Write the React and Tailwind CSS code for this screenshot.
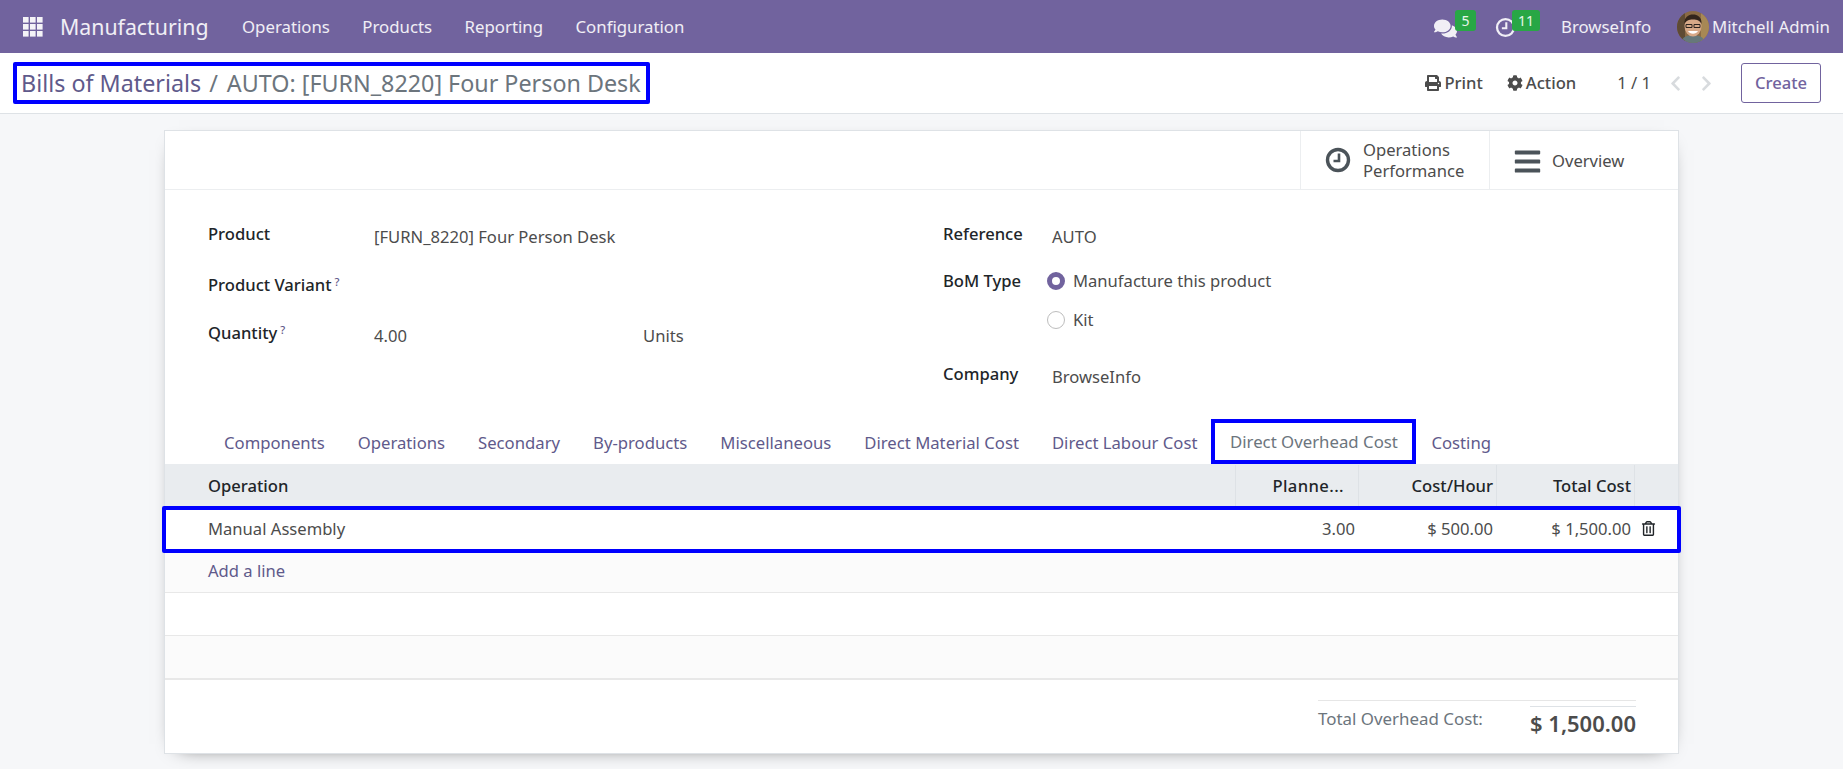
import { FaComments, FaPrint, FaCog, FaBars, FaRegTrashAlt, FaChevronLeft, FaChevronRight } from "react-icons/fa";

const MENU = ["Operations", "Products", "Reporting", "Configuration"];

const TABS = [
    "Components",
    "Operations",
    "Secondary",
    "By-products",
    "Miscellaneous",
    "Direct Material Cost",
    "Direct Labour Cost",
];

function AppsIcon() {
    const cells = [0, 7, 14];
    return (
        <svg width="20" height="20" viewBox="0 0 20 20" fill="#fff" fillOpacity="0.92">
            {cells.map((y) =>
                cells.map((x) => <rect key={`${x}-${y}`} x={x} y={y} width="5.6" height="5.6" />),
            )}
        </svg>
    );
}

function Avatar() {
    return (
        <svg width="32" height="32" viewBox="0 0 32 32" className="rounded-full">
            <rect width="32" height="32" fill="#8a6a45" />
            <rect x="0" y="0" width="8" height="32" fill="#5e4a34" />
            <rect x="24" y="0" width="8" height="32" fill="#a78855" />
            <path d="M4 32c1-6 6-8 12-8s11 2 12 8z" fill="#66787a" />
            <ellipse cx="16" cy="15" rx="8.5" ry="10.5" fill="#d6a888" />
            <path d="M7.5 13c-.5-7 4-9.500 8.500-9.500s9 2.500 8.500 9.500c-2-3.500-4-4.500-8.500-4.500s-6.500 1-8.500 4.500z" fill="#33251c" />
            <path d="M9 13.500h6v3H9zM17 13.500h6v3h-6z" fill="none" stroke="#2c2420" strokeWidth="1" />
            <path d="M11 20c2 3.500 8 3.500 10 0z" fill="#fff" />
        </svg>
    );
}

function ClockIcon({ size, color, stroke }) {
    return (
        <svg width={size} height={size} viewBox="0 0 26 26" fill="none" stroke={color}>
            <circle cx="13" cy="13" r="10.500" strokeWidth={stroke} />
            <path d="M14 6.500v7.500H8.500" strokeWidth="2.600" />
        </svg>
    );
}

function Field({ label, help, children, className }) {
    return (
        <div className={`flex ${className}`}>
            <div className="w-[166px] shrink-0 font-medium text-[#212529]">
                {label}
                {help && <sup className="ml-[3px] text-[11px] text-[#5f5a8b]">?</sup>}
            </div>
            <div className="flex-1 pt-[3px]">{children}</div>
        </div>
    );
}

function Radio({ checked, label, className }) {
    return (
        <div className={`flex items-center gap-[8px] ${className}`}>
            {checked ? (
                <span className="h-[18px] w-[18px] rounded-full border-[5px] border-[#71639e] bg-white" />
            ) : (
                <span className="h-[18px] w-[18px] rounded-full border border-[#bdbdbd] bg-white" />
            )}
            <span>{label}</span>
        </div>
    );
}

export default function App() {
    return (
        <div
            className="flex h-[769px] w-[1843px] flex-col overflow-hidden bg-[#f6f7f9] text-[16.6px] leading-[24px] text-[#4c4c4c]"
            style={{ fontFamily: '"Noto Sans", "Open Sans", sans-serif' }}
        >
            <nav className="flex h-[53px] shrink-0 items-center bg-[#71639e] text-[16.8px] text-white/90">
                <div className="ml-[23px] flex items-center">
                    <AppsIcon />
                </div>
                <div className="ml-[17px] w-[182px] text-[21.3px]">Manufacturing</div>
                <div className="flex gap-[32.5px]">
                    {MENU.map((item) => (
                        <span key={item}>{item}</span>
                    ))}
                </div>
                <div className="ml-auto flex h-full items-center pr-[13px]">
                    <div className="flex h-full items-start">
                        <FaComments className="mt-[17px] text-[23px]" />
                        <span className="-ml-[2px] mt-[10px] flex h-[21px] w-[21px] items-center justify-center rounded-[3px] bg-[#28a745] text-[14px]">
                            5
                        </span>
                    </div>
                    <div className="ml-[19px] flex h-full items-start">
                        <div className="mt-[17px]">
                            <ClockIcon size={21} color="#f1eff6" stroke={2.800} />
                        </div>
                        <span className="-ml-[4px] mt-[10px] flex h-[21px] w-[28px] items-center justify-center rounded-[3px] bg-[#28a745] text-[14px]">
                            11
                        </span>
                    </div>
                    <span className="ml-[21px]">BrowseInfo</span>
                    <span className="ml-[26px] mr-[3px] flex">
                        <Avatar />
                    </span>
                    <span>Mitchell Admin</span>
                </div>
            </nav>

            <div className="flex h-[61px] shrink-0 items-center border-b border-[#dee2e6] bg-white pl-[13px] pr-[22px]">
                <div className="flex h-[42px] w-[637px] items-center rounded-[2px] border-4 border-[#0000ff] pl-[4px] text-[23.3px] text-[#6c757d]">
                    <span className="text-[#5f5a8b]">Bills of Materials</span>
                    <span className="ml-[8px] mr-[9px]">/</span>
                    <span>AUTO: [FURN_8220] Four Person Desk</span>
                </div>
                <div className="ml-auto flex items-center font-medium text-[#4c4c4c]">
                    <span className="flex items-center gap-[3px]">
                        <FaPrint className="text-[16px]" />
                        Print
                    </span>
                    <span className="ml-[24px] flex items-center gap-[3px]">
                        <FaCog className="text-[16px]" />
                        Action
                    </span>
                </div>
                <span className="ml-[41px]">1 / 1</span>
                <div className="ml-[16px] flex gap-[14px] text-[17px] text-[#d8dbde]">
                    <FaChevronLeft />
                    <FaChevronRight />
                </div>
                <button className="ml-[26px] flex h-[40px] w-[80px] items-center justify-center rounded-[3px] border border-[#71639e] bg-white font-medium text-[#71639e]">
                    Create
                </button>
            </div>

            <div className="flex flex-1 justify-center pt-[16px]">
                <div className="flex h-[624px] w-[1515px] flex-col border border-[#dee2e6] bg-white shadow-[0_5px_20px_-15px_#000]">
                    <div className="flex h-[59px] shrink-0 justify-end border-b border-[#eceef0]">
                        <div className="flex w-[189px] items-center gap-[12px] border-l border-[#eceef0] pl-[24px] leading-[21px]">
                            <ClockIcon size={26} color="#4b5359" stroke={3.400} />
                            <span>
                                Operations
                                <br />
                                Performance
                            </span>
                        </div>
                        <div className="flex w-[189px] items-center gap-[10px] border-l border-[#eceef0] pl-[23px] pt-[2px]">
                            <FaBars className="text-[29px] text-[#4b5359]" />
                            <span>Overview</span>
                        </div>
                    </div>

                    <div className="flex h-[227px] shrink-0 pl-[43px] pt-[32px]">
                        <div className="w-[735px]">
                            <Field label="Product" className="h-[51px]">
                                [FURN_8220] Four Person Desk
                            </Field>
                            <Field label="Product Variant" help className="h-[48px]" />
                            <Field label="Quantity" help>
                                <div className="flex">
                                    <span className="w-[269px]">4.00</span>
                                    <span>Units</span>
                                </div>
                            </Field>
                        </div>
                        <div className="flex-1">
                            <div className="flex h-[47px]">
                                <div className="w-[109px] font-medium text-[#212529]">Reference</div>
                                <div className="pt-[3px]">AUTO</div>
                            </div>
                            <div className="flex h-[93px]">
                                <div className="w-[104px] font-medium text-[#212529]">BoM Type</div>
                                <div>
                                    <Radio checked label="Manufacture this product" className="h-[24px]" />
                                    <Radio label="Kit" className="mt-[15px] h-[24px]" />
                                </div>
                            </div>
                            <div className="flex">
                                <div className="w-[109px] font-medium text-[#212529]">Company</div>
                                <div className="pt-[3px]">BrowseInfo</div>
                            </div>
                        </div>
                    </div>

                    <div className="flex h-[47px] shrink-0 items-center pl-[59px] text-[16.7px]">
                        <div className="flex gap-[33px] pt-[4px] text-[#5f5a8b]">
                            {TABS.map((tab) => (
                                <span key={tab}>{tab}</span>
                            ))}
                        </div>
                        <div className="ml-[14px] flex h-[45px] w-[205px] items-center justify-center self-end border-4 border-[#0000ff] text-[16.8px] text-[#6c757d]">
                            Direct Overhead Cost
                        </div>
                        <span className="ml-[15px] pt-[4px] text-[#5f5a8b]">Costing</span>
                    </div>

                    <div className="flex h-[42px] shrink-0 items-center bg-[#e9ecef] pt-[1px] font-medium text-[#212529]">
                        <div className="flex-1 pl-[43px]">Operation</div>
                        <div className="flex h-full w-[123px] items-center justify-end border-l border-[#dee2e6] pr-[14px] tracking-[0.4px]">
                            Planne...
                        </div>
                        <div className="flex h-full w-[138px] items-center justify-end border-l border-[#dee2e6] pr-[3px]">
                            Cost/Hour
                        </div>
                        <div className="flex h-full w-[138px] items-center justify-end border-l border-[#dee2e6] pr-[3px]">
                            Total Cost
                        </div>
                        <div className="h-full w-[44px] border-l border-[#dee2e6]" />
                    </div>

                    <div className="relative -mx-[3px] flex h-[47px] shrink-0 items-center rounded-[2px] border-4 border-[#0000ff] bg-white pb-[2px]">
                        <div className="flex-1 pl-[42px]">Manual Assembly</div>
                        <div className="w-[123px] pr-[3px] text-right">3.00</div>
                        <div className="w-[138px] pr-[3px] text-right">$ 500.00</div>
                        <div className="w-[138px] pr-[3px] text-right">$ 1,500.00</div>
                        <div className="flex w-[43px] pl-[7px] text-[15px] text-[#212529]">
                            <FaRegTrashAlt />
                        </div>
                    </div>

                    <div className="flex h-[40px] shrink-0 items-center border-b border-[#e8e8e8] bg-[#fbfbfb] pb-[4px] pl-[43px] text-[#5f5a8b]">
                        Add a line
                    </div>
                    <div className="h-[43px] shrink-0 border-b border-[#e8e8e8] bg-white" />
                    <div className="h-[44px] shrink-0 border-b-2 border-[#e8e8e8] bg-[#fbfbfb]" />

                    <div className="flex flex-1 justify-end pr-[42px] pt-[20px]">
                        <div className="w-[318px] border-t border-[#e6e6e6]">
                            <div className="flex justify-between">
                                <span className="pt-[6px] text-[16.9px] text-[#6c757d]">Total Overhead Cost:</span>
                                <span className="mt-[5px] w-[106px] whitespace-nowrap border-t border-[#dee2e6] text-right text-[22px] font-semibold leading-[32px]">
                                    $ 1,500.00
                                </span>
                            </div>
                        </div>
                    </div>
                </div>
            </div>
        </div>
    );
}
